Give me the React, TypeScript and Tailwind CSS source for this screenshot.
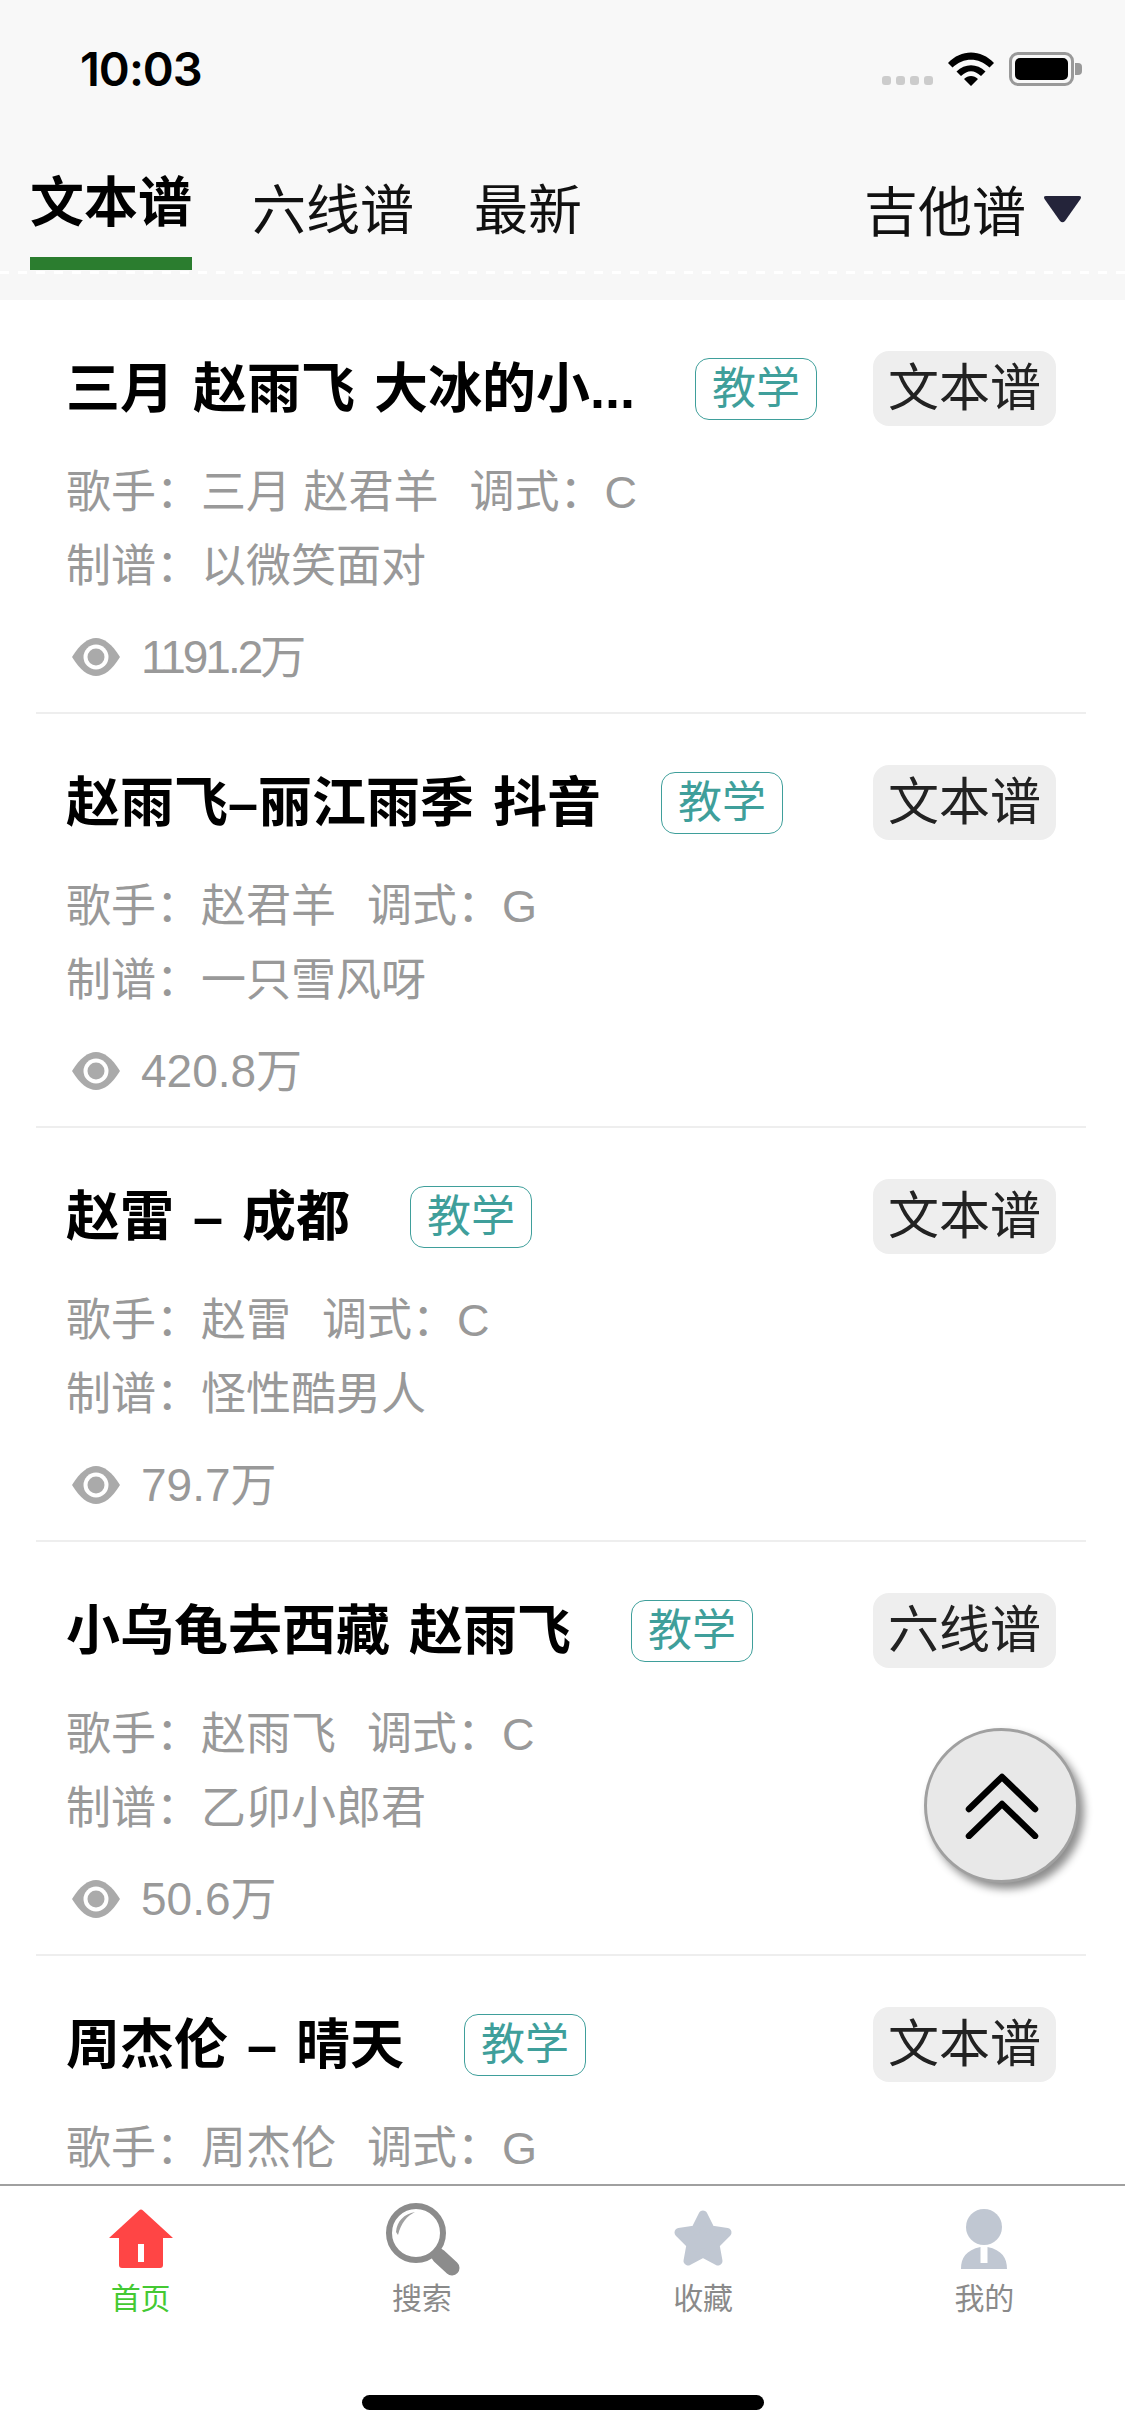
const FONT = '[font-family:"Liberation_Sans","Noto_Sans_CJK_SC",sans-serif]';

type Song = { title: string; type: string; singer: string; keyName: string; author?: string; views?: string; viewsClass?: string };

const SONGS: Song[] = [
  { title: '三月 赵雨飞 大冰的小...', type: '文本谱', singer: '三月 赵君羊', keyName: 'C', author: '以微笑面对', views: '1191.2万', viewsClass: 'tracking-[-3px]' },
  { title: '赵雨飞–丽江雨季 抖音', type: '文本谱', singer: '赵君羊', keyName: 'G', author: '一只雪风呀', views: '420.8万' },
  { title: '赵雷 – 成都', type: '文本谱', singer: '赵雷', keyName: 'C', author: '怪性酷男人', views: '79.7万' },
  { title: '小乌龟去西藏 赵雨飞', type: '六线谱', singer: '赵雨飞', keyName: 'C', author: '乙卯小郎君', views: '50.6万' },
  { title: '周杰伦 – 晴天', type: '文本谱', singer: '周杰伦', keyName: 'G' },
];

function EyeIcon() {
  return (
    <svg width="48" height="38" viewBox="0 0 48 38">
      <path d="M0 19C8 6 16 0 24 0s16 6 24 19c-8 13-16 19-24 19S8 32 0 19Z" fill="#aaaaaa" />
      <circle cx="24" cy="19" r="12.5" fill="#ffffff" />
      <circle cx="24" cy="19" r="8.5" fill="#aaaaaa" />
    </svg>
  );
}

function SongRow({ song }: { song: Song }) {
  return (
    <div className="ml-[36px] mr-[39px] shrink-0 border-b-2 border-[#eeeeee] pl-[30px] pr-[30px] pt-[51px] last:border-b-0">
      <div className="flex h-[75px] items-center">
        <span className="text-[54px] font-bold leading-none whitespace-nowrap text-black [word-spacing:4px]">{song.title}</span>
        <span className="ml-[60px] flex h-[62px] w-[122px] items-center justify-center rounded-[14px] border border-[#3f9f9b] text-[44px] leading-none text-[#3f9f9b]">教学</span>
        <span className="ml-auto flex h-[75px] w-[183px] items-center justify-center rounded-[16px] bg-[#eeeeee] text-[51px] leading-none text-[#222222]">{song.type}</span>
      </div>
      <div className="mt-[30px] flex text-[45px] leading-[74px] text-[#999999]">
        <span>歌手：{song.singer}</span>
        <span className="ml-[31px]">调式：{song.keyName}</span>
      </div>
      {song.author && <div className="text-[45px] leading-[74px] text-[#999999]">制谱：{song.author}</div>}
      {song.views && (
        <div className="mb-[18px] mt-[16px] flex h-[74px] items-center text-[46px] text-[#999999]">
          <span className="ml-[6px] mr-[21px] flex"><EyeIcon /></span>
          <span className={song.viewsClass}>{song.views}</span>
        </div>
      )}
    </div>
  );
}

function HomeIcon() {
  return (
    <svg width="76" height="76" viewBox="0 0 76 76">
      <path d="M36 9.500a3 3 0 0 1 4 0L70 37H60v27a3 3 0 0 1-3 3H19a3 3 0 0 1-3-3V37H6Z" fill="#ff4545" />
      <rect x="35" y="43" width="6" height="18" fill="#ffffff" />
    </svg>
  );
}

function SearchIcon() {
  return (
    <svg width="76" height="76" viewBox="0 0 76 76">
      <circle cx="32" cy="32" r="27" fill="none" stroke="#8c8c8c" strokeWidth="6" />
      <path d="M12 31C13 20 20 13 31 11 23 15 17 22 14 34Z" fill="#a0a0a0" />
      <path d="M55 55 68 67" stroke="#8c8c8c" strokeWidth="15" strokeLinecap="round" />
    </svg>
  );
}

function StarIcon() {
  return (
    <svg width="76" height="76" viewBox="0 0 76 76">
      <path d="M38 14 45.500 29 62 31.500 50 43.500 53 60 38 52 23 60 26 43.500 14 31.500 30.500 29Z" fill="#c0c7d2" stroke="#c0c7d2" strokeWidth="9" strokeLinejoin="round" />
    </svg>
  );
}

function PersonIcon() {
  return (
    <svg width="76" height="76" viewBox="0 0 76 76">
      <circle cx="38" cy="26" r="18" fill="#c0c7d2" />
      <path d="M15 68C15 57 20 49 34.500 46V62H41.500V46C56 49 61 57 61 68Z" fill="#c0c7d2" />
    </svg>
  );
}

function TabItem({ label, active, children }: { label: string; active?: boolean; children: React.ReactNode }) {
  return (
    <div className="flex flex-col items-center">
      {children}
      <span className={`mt-[4px] text-[30px] leading-[36px] ${active ? 'text-[#44c933]' : 'text-[#8a8a8a]'}`}>{label}</span>
    </div>
  );
}

export default function App() {
  return (
    <div className={`relative flex h-[2436px] w-[1125px] flex-col overflow-hidden bg-white ${FONT}`}>
      <header className="h-[300px] shrink-0 bg-[#f7f7f7]">
        <div className="h-[270px] bg-[#f8f8f8]">
          <div className="flex h-[150px] items-start justify-between pl-[80px] pr-[43px] pt-[42px]">
            <span className="font-['Inter'] text-[47px] font-semibold leading-[54px] tracking-[-1px] text-black">10:03</span>
            <div className="mt-[10px] flex items-end">
              <div className="mb-px flex gap-[5px]">
                {[0, 1, 2, 3].map((i) => <span key={i} className="h-[9px] w-[9px] rounded-[3px] bg-[#cccccc]" />)}
              </div>
              <svg className="ml-[15px]" width="46" height="34" viewBox="0 0 46 34">
                <path d="M0 11C13-3 33-3 46 11l-4.500 4.500C30.500 5 15.500 5 4.500 15.500Z M8.500 19.500C17 11 29 11 37.500 19.500L33 24C26 17.500 20 17.500 13 24Z M16 27C20 23 26 23 30 27L23 34Z" fill="#000000" />
              </svg>
              <div className="ml-[15px] flex items-center">
                <div className="flex h-[34px] w-[65px] items-center justify-center rounded-[9px] border-[3px] border-[#999999]">
                  <span className="h-[22px] w-[53px] rounded-[5px] bg-black" />
                </div>
                <span className="ml-px h-[12px] w-[7px] rounded-r-[4px] bg-[#999999]" />
              </div>
            </div>
          </div>
          <div className="flex h-[120px] items-start pl-[30px] pr-[43px]">
            <div className="flex w-[162px] flex-col items-center pt-[23px]">
              <span className="text-[54px] font-bold leading-[60px] text-black">文本谱</span>
              <span className="mt-[24px] h-[13px] w-full bg-[#2b7d2f]" />
            </div>
            <span className="ml-[60px] pt-[31px] text-[54px] leading-[60px] text-[#111111]">六线谱</span>
            <span className="ml-[60px] pt-[31px] text-[54px] leading-[60px] text-[#111111]">最新</span>
            <div className="ml-auto flex items-start pt-[33px]">
              <span className="text-[54px] leading-[60px] text-[#111111]">吉他谱</span>
              <svg className="ml-[17px] mt-[12px]" width="39" height="28" viewBox="0 0 39 28">
                <path d="M3 1H36Q39 1 37.500 4L22 26Q19.500 28.500 17 26L1.500 4Q0 1 3 1Z" fill="#24243a" />
              </svg>
            </div>
          </div>
        </div>
        <div className="mt-px h-[3px] bg-[repeating-linear-gradient(90deg,#ffffff_0,#ffffff_9px,transparent_9px,transparent_18px)]" />
      </header>

      <main className="flex min-h-0 flex-1 flex-col">
        {SONGS.map((song) => <SongRow key={song.title} song={song} />)}
      </main>

      <button className="absolute left-[924px] top-[1728px] flex h-[155px] w-[155px] items-center justify-center rounded-full border-[3px] border-[#a0a0a0] bg-[#e8e8e8] shadow-[5px_6px_9px_rgba(0,0,0,0.45)]">
        <svg width="76" height="66" viewBox="0 0 76 66">
          <path d="M5 36 38 4 71 36 M5 63 38 31 71 63" fill="none" stroke="#000000" strokeWidth="6.500" strokeLinecap="round" strokeLinejoin="round" />
        </svg>
      </button>

      <footer className="h-[252px] shrink-0 border-t-2 border-[#a0a0a0] bg-white">
        <nav className="grid grid-cols-4 pt-[15px]">
          <TabItem label="首页" active><HomeIcon /></TabItem>
          <TabItem label="搜索"><SearchIcon /></TabItem>
          <TabItem label="收藏"><StarIcon /></TabItem>
          <TabItem label="我的"><PersonIcon /></TabItem>
        </nav>
        <div className="mx-auto mt-[78px] h-[15px] w-[402px] rounded-full bg-black" />
      </footer>
    </div>
  );
}
